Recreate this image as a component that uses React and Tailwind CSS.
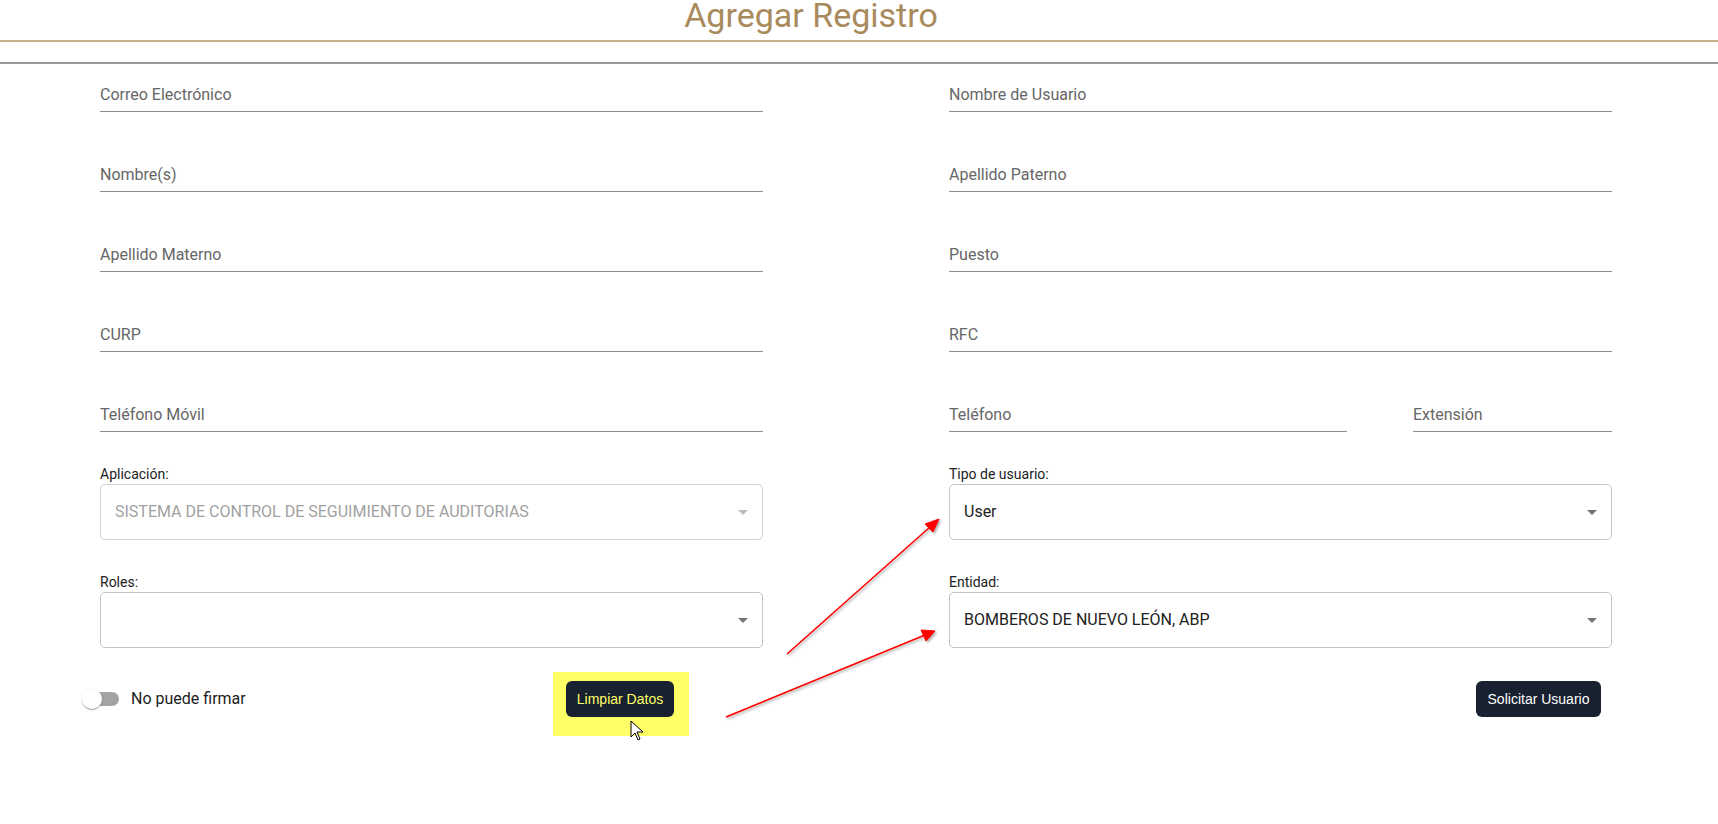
import { useState } from "react";

const leftFields = ["Correo Electrónico", "Nombre(s)", "Apellido Materno", "CURP", "Teléfono Móvil"];
const rightFields = ["Nombre de Usuario", "Apellido Paterno", "Puesto", "RFC"];

function TextField({ label }) {
  return (
    <div className="h-[48px] flex items-end border-b border-[#8e8e8e]">
      <span className="pb-[4px] text-[16px] leading-[24px] text-[#666666]">{label}</span>
    </div>
  );
}

function ArrowDrop({ disabled }) {
  return (
    <svg viewBox="0 0 24 24" className="w-6 h-6" fill={disabled ? "#bdbdbd" : "#757575"}>
      <path d="M7 10l5 5 5-5z" />
    </svg>
  );
}

function SelectField({ label, value, disabled }) {
  return (
    <div className="flex flex-col">
      <span className="text-[14px] leading-[20px] text-[#212121]">{label}</span>
      <div
        className={`h-[56px] rounded-[5px] border flex items-center justify-between pl-[14px] pr-[7px] ${
          disabled ? "border-[#d2d2d2]" : "border-[#c4c4c4]"
        }`}
      >
        <span className={`text-[16px] ${disabled ? "text-[#a1a1a1]" : "text-[#212121]"}`}>{value}</span>
        <ArrowDrop disabled={disabled} />
      </div>
    </div>
  );
}

export default function App() {
  const [canSign, setCanSign] = useState(false);

  return (
    <div
      className="relative w-[1718px] h-[824px] bg-white overflow-hidden"
      style={{ fontFamily: "Roboto, 'Liberation Sans', sans-serif" }}
    >
      {/* header */}
      <div className="h-[40px] w-full text-center pr-[96px]">
        <h1 className="text-[34px] leading-[30px] font-normal text-[#a88a5c]">Agregar Registro</h1>
      </div>
      <div className="h-[2px] bg-[#c8b08c]" />
      <div className="h-[20px]" />
      <div className="h-[2px] bg-[#9a9a9a]" />

      {/* form */}
      <div className="pl-[100px] w-[1612px] grid grid-cols-2 gap-x-[186px] gap-y-[32px]">
        {leftFields.slice(0, 4).map((l, i) => (
          <div key={l} className="contents">
            <TextField label={l} />
            <TextField label={rightFields[i]} />
          </div>
        ))}
        <TextField label={leftFields[4]} />
        <div className="grid grid-cols-[398px_199px] justify-between">
          <TextField label="Teléfono" />
          <TextField label="Extensión" />
        </div>

        <SelectField label="Aplicación:" value="SISTEMA DE CONTROL DE SEGUIMIENTO DE AUDITORIAS" disabled />
        <SelectField label="Tipo de usuario:" value="User" />
        <SelectField label="Roles:" value="" />
        <SelectField label="Entidad:" value="BOMBEROS DE NUEVO LEÓN, ABP" />
      </div>

      {/* actions */}
      <div className="mt-[24px] flex items-start pl-[73px] pr-[117px]">
        <div className="w-[480px] mt-[8px] h-[38px] flex items-center">
          <button
            onClick={() => setCanSign(!canSign)}
            className="relative w-[58px] h-[38px] shrink-0"
          >
            <span className="absolute left-[12px] top-[12px] w-[34px] h-[14px] rounded-full bg-[#a3a3a3]" />
            <span
              className={`absolute top-[9px] w-[20px] h-[20px] rounded-full bg-white shadow-[0_2px_1px_-1px_rgba(0,0,0,0.2),0_1px_1px_0_rgba(0,0,0,0.14),0_1px_3px_0_rgba(0,0,0,0.12)] ${
                canSign ? "left-[29px]" : "left-[9px]"
              }`}
            />
          </button>
          <span className="text-[16px] text-[#1c1c1c]">No puede firmar</span>
        </div>

        <div className="w-[136px] h-[64px] bg-[#ffff66] pt-[9px] pl-[13px]">
          <button
            className="w-[108px] h-[36px] rounded-[6px] bg-[#18212f] text-[#ffff66] text-[14px]"
            style={{ fontFamily: "'Liberation Sans', Arial, sans-serif" }}
          >
            Limpiar Datos
          </button>
        </div>

        <button
          className="ml-auto mt-[9px] w-[125px] h-[36px] rounded-[6px] bg-[#18212f] text-white text-[14px]"
          style={{ fontFamily: "'Liberation Sans', Arial, sans-serif" }}
        >
          Solicitar Usuario
        </button>
      </div>

      {/* annotation arrows and cursor */}
      <svg className="absolute inset-0 pointer-events-none" width="1718" height="824">
        <defs>
          <filter id="sh" x="-10%" y="-10%" width="120%" height="120%">
            <feDropShadow dx="1.5" dy="1.5" stdDeviation="1" floodColor="#000" floodOpacity="0.35" />
          </filter>
        </defs>
        <g filter="url(#sh)" stroke="#ff0000" fill="#ff0000">
          <line x1="787" y1="654" x2="930" y2="527" strokeWidth="1.6" />
          <polygon points="939,519 925,524 933,532" strokeWidth="1" />
          <line x1="726" y1="717" x2="925" y2="635" strokeWidth="1.6" />
          <polygon points="935,631 921,630 926,641" strokeWidth="1" />
        </g>
        <polygon
          points="631,721 631,737 635,733 638,740 640,739 637,732 643,732"
          fill="#ffffff"
          stroke="#000000"
          strokeWidth="1"
          strokeLinejoin="round"
        />
      </svg>
    </div>
  );
}
